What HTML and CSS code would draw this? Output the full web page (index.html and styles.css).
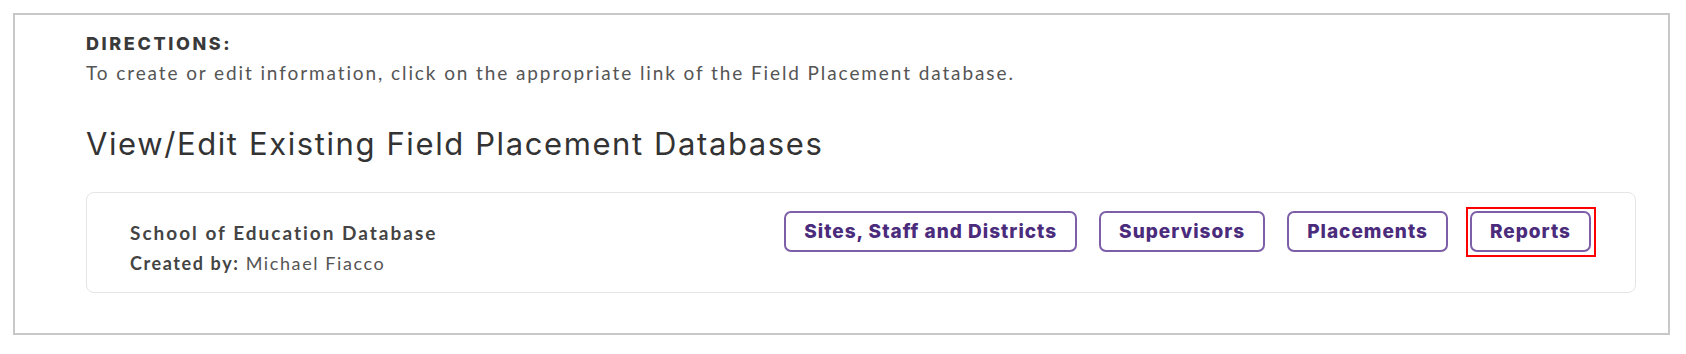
FILE: index.html
```html
<!DOCTYPE html>
<html lang="en">
<head>
    <meta charset="UTF-8">
    <meta name="viewport" content="width=device-width, initial-scale=1.0">
    <title>Field Placement Databases</title>
    <link rel="stylesheet" href="styles.css">
</head>
<body>
    <div class="panel">
        <div class="directions">
            <h4>DIRECTIONS:</h4>
            <p>To create or edit information, click on the appropriate link of the Field Placement database.</p>
        </div>

        <h2>View/Edit Existing Field Placement Databases</h2>

        <div class="db-card">
            <div class="db-info">
                <div class="db-name">School of Education Database</div>
                <div class="db-owner"><strong>Created by:</strong> Michael Fiacco</div>
            </div>
            <div class="db-links">
                <a href="#" class="btn">Sites, Staff and Districts</a>
                <a href="#" class="btn">Supervisors</a>
                <a href="#" class="btn">Placements</a>
                <span class="highlight"><a href="#" class="btn">Reports</a></span>
            </div>
        </div>
    </div>
</body>
</html>
```

FILE: styles.css
```css
* {
    margin: 0;
    padding: 0;
    box-sizing: border-box;
}

body {
    font-family: Lato, 'Open Sans', sans-serif;
    background: #fff;
    color: #444;
}

.panel {
    margin: 13px 16px 0 13px;
    height: 322px;
    border: 2px solid #c8c8c8;
    padding: 18px 32px 0 71px;
}

.directions h4 {
    font-family: Inter, 'DejaVu Sans', sans-serif;
    font-weight: 800;
    font-size: 18px;
    line-height: 22px;
    letter-spacing: 2.6px;
    color: #3a3a3a;
}

.directions p {
    margin-top: 5px;
    font-size: 19px;
    line-height: 26px;
    letter-spacing: 1.9px;
    color: #555;
}

h2 {
    font-family: Inter, 'DejaVu Sans', sans-serif;
    font-weight: 400;
    font-size: 31px;
    line-height: 40px;
    letter-spacing: 1.6px;
    color: #333;
    margin-top: 38px;
}

.db-card {
    margin-top: 28px;
    height: 101px;
    border: 1px solid #e5e5e5;
    border-radius: 8px;
    padding: 18px 44px 0 43px;
    display: flex;
    justify-content: space-between;
    align-items: flex-start;
}

.db-info {
    padding-top: 9px;
}

.db-name {
    font-weight: 700;
    font-size: 19px;
    line-height: 26px;
    letter-spacing: 2px;
    color: #444;
}

.db-owner {
    margin-top: 3px;
    font-size: 18px;
    line-height: 28px;
    letter-spacing: 1.6px;
    color: #555;
}

.db-owner strong {
    color: #444;
}

.db-links {
    display: flex;
    gap: 22px;
}

.btn {
    display: flex;
    align-items: center;
    height: 41px;
    padding: 0 18px;
    border: 2px solid #7d5fa8;
    border-radius: 7px;
    font-family: Inter, 'DejaVu Sans', sans-serif;
    font-weight: 800;
    font-size: 19px;
    letter-spacing: 1px;
    color: #4b2b7c;
    text-decoration: none;
}

/* red annotation box around the Reports link */
.highlight {
    display: block;
    margin: -4px -5px -5px -4px;
    padding: 2px 3px 3px 2px;
    border: 2px solid #ff0000;
}
```
